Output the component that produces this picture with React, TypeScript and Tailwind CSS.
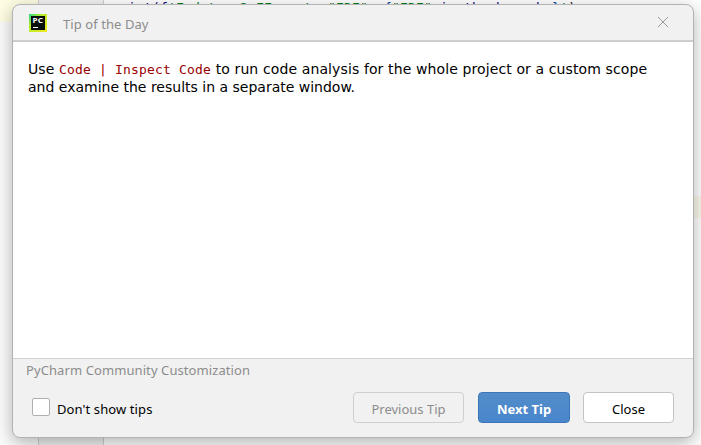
import React from "react";

const ui = "font-['Noto_Sans','Open_Sans',sans-serif]";

function Logo() {
  return (
    <svg width="18" height="18" viewBox="0 0 18 18" className="block shrink-0">
      <defs>
        <linearGradient id="edge" x1="0" y1="0" x2="1" y2="1">
          <stop offset="0" stopColor="#21d789" />
          <stop offset="0.35" stopColor="#b4ec2c" />
          <stop offset="1" stopColor="#f2e81a" />
        </linearGradient>
      </defs>
      <rect width="18" height="18" fill="url(#edge)" />
      <rect x="2" y="2" width="14" height="14" fill="#07100c" />
      <text x="3.6" y="9.4" fill="#fff" fontSize="7.6" fontWeight="700" fontFamily="Open Sans, sans-serif" textLength="10.4" lengthAdjust="spacingAndGlyphs">PC</text>
      <rect x="4" y="13" width="5" height="1" fill="#fff" />
    </svg>
  );
}

export default function App() {
  return (
    <div className="relative h-[445px] w-[701px] overflow-hidden bg-white">
      <div className="flex h-full">
        <div className="w-[38px] bg-[#fcfcfc]"><div className="h-[22px] bg-[#fffde3]" /></div>
        <div className="w-[66px] border-x border-[#d0d0d0] bg-[#f2f2f2]" />
        <div className="flex flex-1 flex-col">
          <pre className="h-[196px] overflow-hidden pl-[8px] font-['DejaVu_Sans_Mono',monospace] text-[13px] leading-[16px] tracking-[0.174px] text-[#067d17]"><span className="text-[#000080]">print(f</span>'F data: 2 FF next  "EDE"  <span className="text-[#0037a6]">{"{"}</span>"EDE" <span className="text-[#000080]">in the breach </span><span className="text-[#0037a6]">{"}"}</span>'<span className="text-black">)</span></pre>
          <div className="h-[22px] bg-[#fcfaed]" />
        </div>
      </div>
      <div className={`absolute left-[12px] top-[4px] flex h-[434px] w-[682px] flex-col overflow-hidden rounded-[8px] border border-[#b2b2b2] bg-[#f1f1f1] shadow-[0_5px_18px_rgba(0,0,0,0.3)] ${ui}`}>
        <header className="flex h-[37px] shrink-0 items-center border-b-2 border-[#cdcdcd] pl-4 pr-6">
          <Logo />
          <h1 className="ml-4 mt-[2px] text-[13px] leading-4 tracking-[0.07px] text-[#8c8c8c]">Tip of the Day</h1>
          <svg className="ml-auto -mt-[2px]" width="12" height="12" viewBox="0 0 12 12" fill="none" stroke="#999" strokeWidth="1"><path d="M1 1l10 10M11 1L1 11" /></svg>
        </header>
        <main className="h-[316px] shrink-0 bg-white pl-[15px] pt-[18px] font-['DejaVu_Sans',sans-serif] text-[14px] leading-[18px] text-black">
          <p className="h-[18px] whitespace-nowrap tracking-[0.115px]">Use <code className="font-['DejaVu_Sans_Mono',monospace] text-[13px] tracking-[0.174px] text-[#990000]">Code | Inspect Code</code> to run code analysis for the whole project or a custom scope</p>
          <p className="whitespace-nowrap">and examine the results in a separate window.</p>
        </main>
        <footer className="flex flex-1 flex-col border-t border-[#d1d1d1] text-[13px]">
          <p className="h-[33px] pl-[13px] pt-[2px] leading-[18px] tracking-[0.09px] text-[#8c8c8c]">PyCharm Community Customization</p>
          <div className="flex h-[31px] items-center pl-[19px] pr-[19px]">
            <span className="-mt-[2px] h-[18px] w-[18px] rounded-[2px] border border-[#b0b0b0] bg-white" />
            <label className="ml-[7px] mt-[4px] tracking-[0.1px]">Don't show tips</label>
            <button className="ml-auto h-[31px] w-[111px] rounded-[4px] border border-[#cfcfcf] pt-[4px] text-[#8c8c8c]">Previous Tip</button>
            <button className="ml-[14px] h-[31px] w-[92px] rounded-[4px] border border-[#3d75b9] bg-gradient-to-b from-[#528cc9] to-[#4986cc] pt-[4px] font-bold text-white">Next Tip</button>
            <button className="ml-[13px] h-[31px] w-[91px] rounded-[4px] border border-[#c4c4c4] bg-white pt-[4px]">Close</button>
          </div>
        </footer>
      </div>
    </div>
  );
}
